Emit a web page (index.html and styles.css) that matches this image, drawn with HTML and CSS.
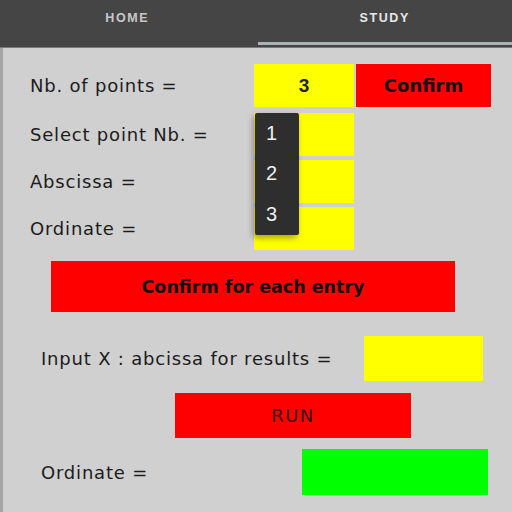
FILE: index.html
```html
<!DOCTYPE html>
<html lang="en">
<head>
    <meta charset="UTF-8">
    <meta name="viewport" content="width=device-width, initial-scale=1.0">
    <title>Study</title>
    <link rel="stylesheet" href="styles.css">
</head>
<body>

    <div class="tabs">
        <div class="tab">HOME</div>
        <div class="tab active">STUDY</div>
    </div>

    <div class="content">
        <div class="row first">
            <span class="label">Nb. of points =</span>
            <div class="field yellow">3</div>
            <button class="btn confirm">Confirm</button>
        </div>
        <div class="row">
            <span class="label">Select point Nb. =</span>
            <div class="field yellow"></div>
        </div>
        <div class="row">
            <span class="label">Abscissa =</span>
            <div class="field yellow"></div>
        </div>
        <div class="row">
            <span class="label">Ordinate =</span>
            <div class="field yellow"></div>
        </div>

        <button class="btn wide">Confirm for each entry</button>

        <div class="row result">
            <span class="label">Input X : abcissa for results =</span>
            <div class="field yellow x-input"></div>
        </div>

        <button class="btn run">RUN</button>

        <div class="row result">
            <span class="label">Ordinate =</span>
            <div class="field green"></div>
        </div>

        <div class="dropdown">
            <div class="option">1</div>
            <div class="option">2</div>
            <div class="option">3</div>
        </div>
    </div>

</body>
</html>
```

FILE: styles.css
```css
body {
    margin: 0;
    width: 512px;
    height: 512px;
    overflow: hidden;
    font-family: 'DejaVu Sans', sans-serif;
    background-color: #d0d0d0;
}

.tabs {
    display: flex;
    height: 47px;
    background-color: #454545;
    border-bottom: 1px solid #7a7a7a;
    font-family: 'Liberation Sans', Arial, sans-serif;
}

.tab {
    flex: 1;
    text-align: center;
    padding-top: 11px;
    font-size: 12.5px;
    font-weight: bold;
    letter-spacing: 1.6px;
    color: #c8c8c8;
    box-sizing: border-box;
}

.tab.active {
    color: #e8e8e8;
    border-bottom: 3px solid #a9b5b3;
    margin-left: 3px;
    margin-bottom: 2px;
}

.content {
    position: relative;
    display: flex;
    flex-direction: column;
    padding-top: 16px;
    height: 464px;
    box-sizing: border-box;
    border-left: 3px solid #a5a5a5;
}

.row {
    display: flex;
    align-items: center;
    height: 43px;
    margin-bottom: 4px;
}

.row.first {
    margin-bottom: 6px;
}

.label {
    width: 224px;
    padding-left: 27px;
    font-size: 18px;
    letter-spacing: 0.8px;
    color: #1c1c1c;
    white-space: nowrap;
}

.field {
    width: 100px;
    height: 100%;
    display: flex;
    align-items: center;
    justify-content: center;
    font-family: 'Liberation Sans', Arial, sans-serif;
    font-size: 19px;
    font-weight: bold;
    color: #222;
}

.yellow {
    background: #ffff00;
}

.green {
    background: #00ff00;
    width: 186px;
    margin-left: 37px;
}

.btn {
    border: none;
    background: #ff0000;
    font-family: 'DejaVu Sans', sans-serif;
    color: #111;
    padding: 0;
}

.confirm {
    width: 135px;
    height: 100%;
    margin-left: 2px;
    font-size: 18px;
    font-weight: bold;
}

.wide {
    width: 404px;
    height: 51px;
    margin: 7px 0 0 48px;
    font-size: 17.5px;
    font-weight: bold;
}

.result {
    height: 45px;
    margin-top: 24px;
    margin-bottom: 0;
}

.result .label {
    padding-left: 38px;
}

.x-input {
    width: 119px;
    margin-left: 99px;
}

.run {
    width: 236px;
    height: 45px;
    margin: 12px 0 0 172px;
    font-size: 18px;
    letter-spacing: 1.5px;
    color: #3a1010;
}

.result + .run + .result {
    margin-top: 11px;
    height: 46px;
}

.dropdown {
    position: absolute;
    left: 252px;
    top: 65px;
    width: 44px;
    height: 122px;
    background: #2e2e2e;
    border-radius: 2px;
    box-shadow: -2px 3px 6px rgba(0, 0, 0, 0.35);
    display: flex;
    flex-direction: column;
    justify-content: space-around;
    font-family: 'Liberation Sans', Arial, sans-serif;
}

.option {
    color: #f0f0f0;
    font-size: 20px;
    padding-left: 11px;
}
```
